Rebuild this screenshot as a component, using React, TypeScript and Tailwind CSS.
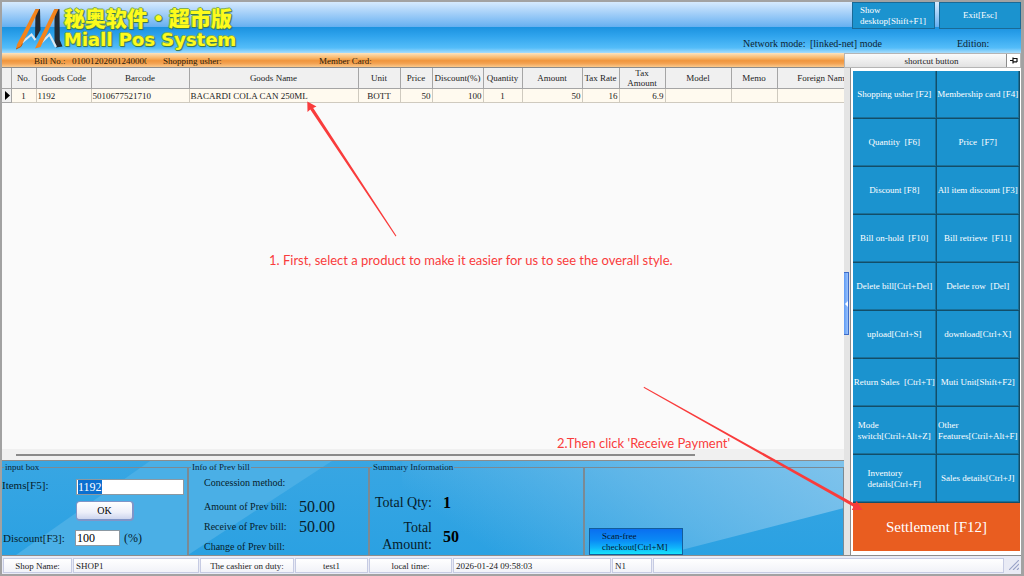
import { useEffect, useRef } from "react";

type Align = "left" | "center" | "right";

interface Column {
  title: string;
  width: string;
  value: string;
  align: Align;
}

const columns: Column[] = [
  { title: "No.", width: "w-[25px]", value: "1", align: "center" },
  { title: "Goods Code", width: "w-[55px]", value: "1192", align: "left" },
  { title: "Barcode", width: "w-[98px]", value: "5010677521710", align: "left" },
  { title: "Goods Name", width: "w-[169px]", value: "BACARDI COLA CAN 250ML", align: "left" },
  { title: "Unit", width: "w-[42px]", value: "BOTT", align: "center" },
  { title: "Price", width: "w-[32px]", value: "50", align: "right" },
  { title: "Discount(%)", width: "w-[51px]", value: "100", align: "right" },
  { title: "Quantity", width: "w-[39px]", value: "1", align: "center" },
  { title: "Amount", width: "w-[60px]", value: "50", align: "right" },
  { title: "Tax Rate", width: "w-[37px]", value: "16", align: "right" },
  { title: "Tax\nAmount", width: "w-[46px]", value: "6.9", align: "right" },
  { title: "Model", width: "w-[66px]", value: "", align: "left" },
  { title: "Memo", width: "w-[46px]", value: "", align: "left" },
  { title: "Foreign Name", width: "w-[92px]", value: "", align: "left" },
];

const alignClass: Record<Align, string> = {
  left: "text-left",
  center: "text-center",
  right: "text-right",
};

const shortcuts: string[] = [
  "Shopping usher [F2]",
  "Membership card [F4]",
  "Quantity  [F6]",
  "Price  [F7]",
  "Discount [F8]",
  "All item discount [F3]",
  "Bill on-hold  [F10]",
  "Bill retrieve  [F11]",
  "Delete bill[Ctrl+Del]",
  "Delete row  [Del]",
  "upload[Ctrl+S]",
  "download[Ctrl+X]",
  "Return Sales  [Ctrl+T]",
  "Muti Unit[Shift+F2]",
  "Mode\nswitch[Ctril+Alt+Z]",
  "Other\nFeatures[Ctril+Alt+F]",
  "Inventory\ndetails[Ctrl+F]",
  "Sales details[Ctrl+J]",
];

function LogoMark() {
  return (
    <svg className="h-[44px] w-[50px] shrink-0" viewBox="0 0 50 44" aria-hidden="true">
      <path d="M21.5 3.3 L26 3 L26.5 24 L21 34 Z" fill="#232a33" />
      <path d="M40.5 3.3 L45.5 3 L45.8 34 L48.5 40.5 L42 41.5 L40.5 37 Z" fill="#232a33" />
      <path d="M4 40 L17.5 28.5 L21.5 34" stroke="#dbe8f2" strokeWidth="2.2" fill="none" />
      <path d="M24 40 L35.5 28.5 L42 41" stroke="#dbe8f2" strokeWidth="2.2" fill="none" />
      <path d="M21.3 3.3 L25.3 3 L7 40.5 L2 43 L3 38.5 Z" fill="#f4841c" />
      <path d="M40.2 3.3 L44.5 3 L26.5 41 L21 42.5 Z" fill="#f4841c" />
      <path d="M2 43 L7 40.5 L8.5 37.5" stroke="#b85a10" strokeWidth="1" fill="none" />
    </svg>
  );
}

function Header() {
  return (
    <header className="flex h-[51px] items-start justify-between bg-[linear-gradient(180deg,#d6eafe_0%,#a9d2f9_20%,#68b1f1_48%,#1c93e0_50%,#2fa3ec_66%,#54bdf9_90%,#a8dcfb_100%)]">
      <div className="flex pl-3 pt-1">
        <LogoMark />
        <h1 className="whitespace-nowrap font-black text-[#fdfb1c] [text-shadow:1px_0_0_#4f8a3c,-1px_0_0_#7fb05a,0_1px_0_#3d7c4a,0_-1px_0_#7fb05a,1px_1px_1px_#1f5a78]">
          <span className="block font-['Noto_Sans_CJK_SC',sans-serif] text-[21px] leading-[22px]">
            秘奥软件・超市版
          </span>
          <span className="block font-['DejaVu_Sans',sans-serif] text-[18px] font-bold leading-[24px]">
            Miall Pos System
          </span>
        </h1>
      </div>
      <div className="w-[278px]">
        <div className="flex justify-end gap-1">
          <button className="flex h-[27px] w-[83px] items-center justify-start whitespace-pre border border-[#1a6a96] bg-[#1b93cf] pl-[7px] text-left text-[9px] leading-[11px] text-white">
            {"Show\ndesktop[Shift+F1]"}
          </button>
          <button className="h-[27px] w-[82px] border border-[#1a6a96] bg-[#1b93cf] text-[9px] text-white">
            Exit[Esc]
          </button>
        </div>
        <div className="flex pt-[9px] text-[10px] leading-3 text-[#0c2333]">
          <span className="w-[67px]">Network mode:</span>
          <span className="w-[147px]">[linked-net] mode</span>
          <span>Edition:</span>
        </div>
      </div>
    </header>
  );
}

function BillBar() {
  return (
    <div className="flex h-[14px] items-end overflow-hidden bg-[linear-gradient(180deg,#fde3bd_0%,#f9b76a_35%,#f0953c_55%,#f3a353_75%,#fbc98c_100%)] pl-8 text-[9px] leading-[11px] text-[#2a1c0c]">
      <span className="w-[38px]">Bill No.:</span>
      <span className="w-[75px] overflow-hidden">01001202601240000</span>
      <span className="ml-4 w-[156px]">Shopping usher:</span>
      <span>Member Card:</span>
    </div>
  );
}

function GoodsTable() {
  return (
    <div className="flex-1 overflow-hidden border-t border-[#8c8c8c] bg-[#fafafa]">
      <table className="w-[867px] table-fixed border-collapse text-[9px] text-[#1c1c1c]">
        <thead>
          <tr className="h-5 bg-[#f0f0f0]">
            <th className="w-[9px] border-b border-r border-[#a5a5a5]" aria-label="Current row" />
            {columns.map((c) => (
              <th
                key={c.title}
                className={`${c.width} whitespace-pre border-b border-r border-[#a5a5a5] p-0 text-center font-normal leading-[10px]`}
              >
                {c.title}
              </th>
            ))}
          </tr>
        </thead>
        <tbody>
          <tr className="h-[14px] bg-[#fffaef]">
            <td className="border-b border-r border-[#a5a5a5] bg-[#f0f0f0] p-0">
              <svg className="ml-[3px] block h-[9px] w-[5px]" viewBox="0 0 5 9" aria-hidden="true">
                <path d="M0 0 L5 4.5 L0 9 Z" fill="#000" />
              </svg>
            </td>
            {columns.map((c) => (
              <td
                key={c.title}
                className={`${alignClass[c.align]} overflow-hidden whitespace-nowrap border-b border-r border-[#cfcabf] px-px py-0 leading-3`}
              >
                {c.value}
              </td>
            ))}
          </tr>
        </tbody>
      </table>
    </div>
  );
}

function PanelBackground() {
  return (
    <svg
      className="absolute inset-0 h-full w-full"
      viewBox="0 0 842 94"
      preserveAspectRatio="none"
      aria-hidden="true"
    >
      <defs>
        <linearGradient id="base" x1="0" x2="0" y1="0" y2="1">
          <stop offset="0" stopColor="#38a6e3" />
          <stop offset="1" stopColor="#2ba1e2" />
        </linearGradient>
        <linearGradient id="sheen" x1="0" x2="1" y1="0.3" y2="0">
          <stop offset="0" stopColor="#7fc3ec" stopOpacity="0" />
          <stop offset="0.5" stopColor="#7fc3ec" stopOpacity="0.55" />
          <stop offset="1" stopColor="#7fc3ec" />
        </linearGradient>
      </defs>
      <rect width="842" height="94" fill="url(#base)" />
      <path d="M14 94 L148 0 L330 0 L186 94 Z" fill="#4aafe6" />
      <path d="M400 0 H842 V47 L660 94 H400 Z" fill="url(#sheen)" />
    </svg>
  );
}

const groupClass = "relative min-w-0 border-r-2 border-t border-[#7b8a94]";
const legendClass = "ml-[2px] px-px text-[9px] leading-3 text-[#0a2436]";

function BottomPanel() {
  const itemsRef = useRef<HTMLInputElement>(null);

  useEffect(() => {
    itemsRef.current?.focus();
    itemsRef.current?.select();
  }, []);

  return (
    <section className="relative flex h-[94px] overflow-hidden text-[#061c2b]">
      <PanelBackground />

      <fieldset className={`${groupClass} w-[187px]`}>
        <legend className={legendClass}>input box</legend>
        <div className="flex pt-[6px]">
          <label htmlFor="items" className="w-[74px] text-[11px] leading-3">
            Items[F5]:
          </label>
          <input
            id="items"
            ref={itemsRef}
            defaultValue="1192"
            className="h-4 w-[108px] border border-[#8b98a2] bg-white px-px text-[12px] leading-3 text-black outline-none selection:bg-[#0a6fd0] selection:text-white"
          />
        </div>
        <button className="ml-[74px] mt-[6px] block h-5 w-[58px] rounded-sm border border-b-2 border-r-2 border-[#7f95c8] bg-[linear-gradient(180deg,#ffffff,#eef0fa_60%,#cdd5ee)] text-[10px] leading-3 text-black">
          OK
        </button>
        <div className="flex items-center pt-[9px] text-[11px] leading-3">
          <label htmlFor="discount" className="w-[73px] pl-px">
            Discount[F3]:
          </label>
          <input
            id="discount"
            defaultValue="100"
            className="h-4 w-[45px] border border-[#8b98a2] bg-white px-px text-[12px] leading-3 text-black outline-none"
          />
          <span className="pl-1 text-[12px]">(%)</span>
        </div>
      </fieldset>

      <fieldset className={`${groupClass} w-[181px]`}>
        <legend className={legendClass}>Info of Prev bill</legend>
        <dl className="grid grid-cols-[95px_1fr] items-center pl-[15px] text-[10px] leading-5">
          <dt className="mb-1 whitespace-nowrap">Concession method:</dt>
          <dd />
          <dt>Amount of Prev bill:</dt>
          <dd className="text-[16px]">50.00</dd>
          <dt>Receive of Prev bill:</dt>
          <dd className="text-[16px]">50.00</dd>
          <dt>Change of Prev bill:</dt>
          <dd />
        </dl>
      </fieldset>

      <fieldset className={`${groupClass} w-[215px]`}>
        <legend className={legendClass}>Summary Information</legend>
        <dl className="grid grid-cols-[62px_1fr] items-center gap-x-[11px] gap-y-2 pt-[21px] text-right text-[14px] leading-[17px]">
          <dt className="whitespace-nowrap">Total Qty:</dt>
          <dd className="text-left text-[16px] font-bold text-black">1</dd>
          <dt>Total Amount:</dt>
          <dd className="text-left text-[16px] font-bold text-black">50</dd>
        </dl>
      </fieldset>

      <div className="relative mt-[6px] flex flex-1 items-end border-r border-t border-[#7b8a94] pl-1">
        <button className="h-[27px] w-[94px] whitespace-pre border border-[#135d9c] bg-[linear-gradient(180deg,#0a6ff0_0%,#0a8af5_45%,#10b4fa_75%,#16e4fc_100%)] pl-3 text-left text-[9px] leading-[11px] text-[#04142c]">
          {"Scan-free\ncheckout[Ctrl+M]"}
        </button>
      </div>
    </section>
  );
}

function ShortcutPanel() {
  return (
    <aside className="flex w-[177px] shrink-0 flex-col">
      <div className="flex h-[15px] items-center border border-[#b5b5b5] bg-[linear-gradient(180deg,#fbfbfb,#e2e2e2)] text-[9px] leading-3 text-[#1c1c1c]">
        <h2 className="flex-1 pl-3 text-center">shortcut button</h2>
        <button
          aria-label="Pin panel"
          className="flex h-full w-[14px] items-center justify-center border-l border-[#8c8c8c] bg-white"
        >
          <svg className="h-[7px] w-[8px]" viewBox="0 0 8 7" aria-hidden="true">
            <path d="M0 3.5 H3 M3 0.5 V6.5 M3 1.5 H7 V5 M3 4.8 H7" stroke="#111" strokeWidth="1.2" fill="none" />
          </svg>
        </button>
      </div>
      <div className="flex flex-1">
        <div className="flex w-[7px] items-center border-r border-[#8c8c8c] bg-[#e4e4e4] pb-4">
          <button
            aria-label="Collapse panel"
            className="flex h-[63px] w-[5px] items-center justify-center border-y border-r border-[#3f6cc8] bg-[linear-gradient(90deg,#5f9bf5,#9cc4fc)]"
          >
            <svg className="h-[6px] w-[3px]" viewBox="0 0 3 6" aria-hidden="true">
              <path d="M3 0 L0 3 L3 6 Z" fill="#fff" />
            </svg>
          </button>
        </div>
        <div className="flex-1 bg-white pb-1 pl-[2px] pr-px pt-[3px]">
          <div className="grid grid-cols-2">
            {shortcuts.map((label) => (
              <button
                key={label}
                className="flex h-12 items-center justify-center overflow-hidden whitespace-pre border-b border-r border-[#124e69] bg-[#1b93cf] text-left text-[9px] leading-[11px] text-white shadow-[inset_-1px_-1px_0_#1a7099]"
              >
                {label}
              </button>
            ))}
          </div>
          <button className="h-12 w-full bg-[#e95d20] text-[15px] leading-4 text-white">Settlement [F12]</button>
        </div>
      </div>
    </aside>
  );
}

function StatusBar() {
  const cell =
    "mr-px h-[15px] overflow-hidden whitespace-nowrap border border-[#c6cbe3] bg-[linear-gradient(180deg,#ffffff,#f1f2f8)]";
  return (
    <footer className="flex h-[19px] items-center border-t border-[#8c8c8c] bg-[#e9ebf5] pl-px text-[9px] leading-[14px] text-[#1c1c1c]">
      <span className={`${cell} w-[69px] text-center`}>Shop Name:</span>
      <span className={`${cell} w-[126px] pl-[2px]`}>SHOP1</span>
      <span className={`${cell} w-[94px] text-center`}>The cashier on duty:</span>
      <span className={`${cell} w-[73px] text-center`}>test1</span>
      <span className={`${cell} w-[83px] text-center`}>local time:</span>
      <span className={`${cell} w-[158px] pl-[2px]`}>2026-01-24 09:58:03</span>
      <span className={`${cell} w-[40px] pl-[2px]`}>N1</span>
      <span className={`${cell} flex-1`} />
      <svg className="ml-1 mr-[2px] h-[10px] w-[10px]" viewBox="0 0 10 10" aria-hidden="true">
        <path d="M0 10 L10 0 M4 10 L10 4 M8 10 L10 8" stroke="#9aa3c8" strokeWidth="1.2" />
      </svg>
    </footer>
  );
}

function Annotations() {
  return (
    <div className="pointer-events-none absolute inset-0 font-['Lato','Open_Sans',sans-serif] text-[13px] leading-5 text-[#f93c3c]">
      <svg className="absolute left-0 top-0 h-[576px] w-[1024px]" viewBox="0 0 1024 576" aria-hidden="true">
        <path
          d="M396.4 235.8 L395.6 236.4 L310.3 109.5 L307.5 112 L307.3 101.5 L316.5 106.5 L313.2 108 Z"
          fill="#f93c3c"
        />
        <path
          d="M644 386.8 L643.6 387.7 L853.5 506.8 L851.8 510 L862.5 510 L856.6 501 L855 504 Z"
          fill="#f93c3c"
        />
      </svg>
      <p className="absolute left-[269px] top-[250px] whitespace-nowrap">
        1. First, select a product to make it easier for us to see the overall style.
      </p>
      <p className="absolute left-[557px] top-[433px] whitespace-nowrap">2.Then click 'Receive Payment'</p>
    </div>
  );
}

export default function App() {
  return (
    <div className="relative font-['Liberation_Serif',serif]">
      <div className="flex min-h-screen flex-col border-2 border-r-[3px] border-[#a2a2a2]">
        <Header />
        <main className="flex flex-1">
          <div className="flex min-w-0 flex-1 flex-col">
            <BillBar />
            <GoodsTable />
            <div className="h-3 border-b border-[#8c8c8c] bg-[#f0f0f0] pl-[14px] pt-[5px]">
              <div className="h-[2px] w-[679px] max-w-full bg-[#8a8a8a]" />
            </div>
            <BottomPanel />
          </div>
          <ShortcutPanel />
        </main>
        <StatusBar />
      </div>
      <Annotations />
    </div>
  );
}
